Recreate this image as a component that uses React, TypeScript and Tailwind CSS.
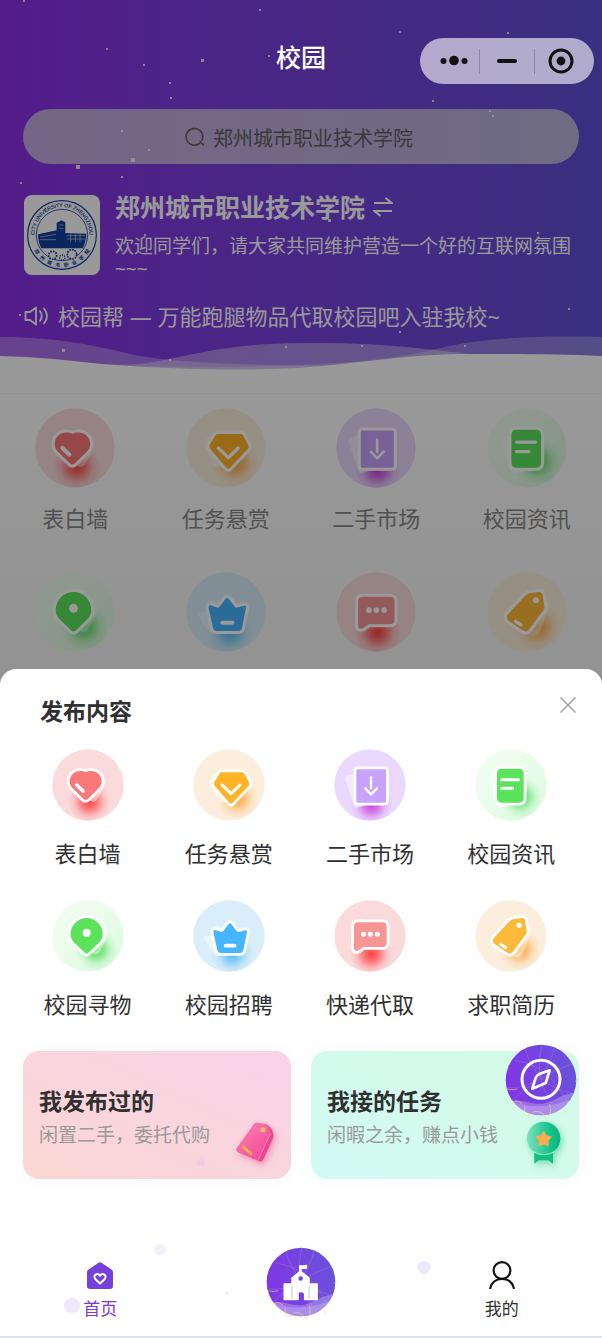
import React, { useId } from "react";

type Kind = "heart" | "gem" | "market" | "news" | "pin" | "crown" | "chat" | "tag";

const palette: Record<Kind, { disc: [string, string]; fill: string; glow: string; at: [number, number] }> = {
  heart: { disc: ["#fadadb", "#fadadb"], fill: "#fa7878", glow: "#ff4545", at: [112, 158] },
  gem: { disc: ["#fbeedd", "#fbeedd"], fill: "#ffb327", glow: "#ffa63d", at: [132, 148] },
  market: { disc: ["#ead9fd", "#ead9fd"], fill: "#c8a2fc", glow: "#c93fe0", at: [112, 166] },
  news: { disc: ["#effdee", "#dafade"], fill: "#5be35b", glow: "#4fdc58", at: [136, 144] },
  pin: { disc: ["#effdee", "#dafade"], fill: "#5be35b", glow: "#4fdc58", at: [132, 148] },
  crown: { disc: ["#d9edfa", "#d9edfa"], fill: "#45b5ff", glow: "#4dbcf5", at: [118, 160] },
  chat: { disc: ["#fadadb", "#fadadb"], fill: "#f79595", glow: "#ff4040", at: [112, 162] },
  tag: { disc: ["#fbeedd", "#fbeedd"], fill: "#fdba38", glow: "#ffa63d", at: [134, 148] },
};

const shapes: Record<Kind, string> = {
  heart: "M101 70C110 65 128 64 139 74C152 86 152 106 140 118L108 149Q101 156 94 149L62 118C50 106 50 86 63 74C74 64 92 65 101 70Z",
  gem: "M87 70H147Q152 70 154 74L168 100Q171 105 167 110L119 161Q114 166 109 161L65 110Q61 105 64 100L79 74Q82 70 87 70Z",
  market: "M71 61H152Q156 61 156 65V157Q156 161 152 161H71Q67 161 67 157V65Q67 61 71 61Z",
  news: "M80 59H132Q146 59 146 73V147Q146 161 132 161H80Q66 161 66 147V73Q66 59 80 59Z",
  pin: "M104 54A48 48 0 0 1 152 102Q152 118 140 129L111 157Q104 164 97 157L68 129Q56 118 56 102A48 48 0 0 1 104 54Z",
  crown: "M67 90L84 96Q88 97 91 93L107 72Q111 67 115 72L131 93Q134 97 138 96L157 91Q163 90 162 96L151 151Q149 159 142 159H82Q75 159 73 151L61 96Q60 89 67 90Z",
  chat: "M72 67H146Q158 67 158 79V129Q158 141 146 141H91Q87 141 84 144L74 151Q60 157 60 145V79Q60 67 72 67Z",
  tag: "M109 60Q113 57 118 57L142 54Q149 54 150 61L155 93Q156 99 152 104L113 156Q106 164 97 158L59 132Q50 125 56 115L103 64Z",
};

const ghosts: Record<Kind, string> = {
  heart: "translate(20 10) rotate(-16 101 105) scale(.94)",
  gem: "translate(-12 14) rotate(18 114 115) scale(.9)",
  market: "translate(-10 12) rotate(-18 110 110) scale(.92)",
  news: "translate(-8 10) rotate(-16 110 110) scale(.95)",
  pin: "translate(24 8) rotate(-16 104 104) scale(.93)",
  crown: "translate(-10 12) rotate(-20 111 110) scale(.88)",
  chat: "translate(36 48) scale(.65)",
  tag: "translate(13 8) rotate(-16 104 110)",
};

function ServiceIcon({ kind, className }: { kind: Kind; className: string }) {
  const id = useId();
  const { disc, fill, glow, at } = palette[kind];
  return (
    <svg viewBox="0 0 216 216" className={className} aria-hidden="true">
      <defs>
        <linearGradient id={`${id}d`} x1="0" y1="0" x2="1" y2="1">
          <stop offset=".3" stopColor={disc[0]} />
          <stop offset="1" stopColor={disc[1]} />
        </linearGradient>
        <radialGradient id={`${id}g`} gradientUnits="userSpaceOnUse" cx={at[0]} cy={at[1]} r="64">
          <stop offset="0" stopColor={glow} />
          <stop offset=".35" stopColor={glow} stopOpacity=".65" />
          <stop offset=".7" stopColor={glow} stopOpacity=".18" />
          <stop offset="1" stopColor={glow} stopOpacity="0" />
        </radialGradient>
        <clipPath id={`${id}c`}>
          <circle cx="108" cy="108" r="107" />
        </clipPath>
      </defs>
      <circle cx="108" cy="108" r="107" fill={`url(#${id}d)`} />
      <circle cx={at[0]} cy={at[1]} r="64" fill={`url(#${id}g)`} clipPath={`url(#${id}c)`} />
      <path d={shapes[kind]} transform={ghosts[kind]} fill="#fff" stroke="#fff" strokeWidth="10" strokeLinejoin="round" opacity=".45" />
      <path d={shapes[kind]} fill="#fff" stroke="#fff" strokeWidth="17" strokeLinejoin="round" />
      <path d={shapes[kind]} fill={fill} />
      <g fill="none" stroke="#fff" strokeWidth="9" strokeLinecap="round" strokeLinejoin="round">
        {kind === "heart" && <path d="M74 108L93 126" strokeWidth="11" />}
        {kind === "gem" && <path d="M87 108L114 134L141 108" />}
        {kind === "market" && <path d="M111 85V118M94 118L111 136L129 118" strokeWidth="7" />}
        {kind === "news" && <path d="M80 92H131M80 118H113" />}
        {kind === "pin" && <circle cx="104" cy="98" r="12" fill="#fff" stroke="none" />}
        {kind === "crown" && <path d="M98 137H125" strokeWidth="11" />}
        {kind === "chat" && (
          <g fill="#fff" stroke="none">
            <circle cx="89" cy="103" r="7.5" />
            <circle cx="109" cy="103" r="7.5" />
            <circle cx="130" cy="103" r="7.5" />
          </g>
        )}
        {kind === "tag" && (
          <>
            <circle cx="132" cy="76" r="8" fill="#fff" stroke="none" />
            <path d="M77 133L92 143" />
          </>
        )}
      </g>
    </svg>
  );
}

const services: { kind: Kind; label: string }[] = [
  { kind: "heart", label: "表白墙" },
  { kind: "gem", label: "任务悬赏" },
  { kind: "market", label: "二手市场" },
  { kind: "news", label: "校园资讯" },
  { kind: "pin", label: "校园寻物" },
  { kind: "crown", label: "校园招聘" },
  { kind: "chat", label: "快递代取" },
  { kind: "tag", label: "求职简历" },
];

const sparks: [number, number, number][] = [
  [24, 1, 2], [260, 10, 2], [107, 49, 2], [144, 65, 2], [202, 60, 3], [269, 56, 2], [170, 83, 2], [171, 98, 2],
  [122, 131, 2], [149, 150, 2], [132, 159, 4], [77, 166, 4], [122, 177, 2], [21, 183, 2], [400, 32, 2], [508, 33, 2],
  [433, 101, 2], [490, 111, 2], [493, 116, 2], [145, 235, 2], [329, 220, 3], [538, 233, 2], [20, 315, 2], [441, 315, 2],
  [569, 309, 2], [400, 332, 2], [63, 350, 3], [286, 347, 2], [170, 360, 2], [362, 346, 2], [465, 346, 2],
];

function Sparks() {
  return (
    <svg className="pointer-events-none absolute left-0 top-0 h-[373px] w-full" viewBox="0 0 602 373" preserveAspectRatio="none" aria-hidden="true">
      {sparks.map(([x, y, s]) => (
        <rect key={`${x}-${y}`} x={x - 1} y={y - 1} width={s} height={s} fill="#fffde0" opacity=".85" />
      ))}
    </svg>
  );
}

function Waves() {
  return (
    <svg className="block h-[41px] w-full" viewBox="0 332 602 41" preserveAspectRatio="none" aria-hidden="true">
      <path d="M0 337C60 337 100 347 135 355C190 366 300 367 602 366V373H0Z" fill="#fff" opacity=".3" />
      <path d="M0 356C70 357 90 367 140 364C185 358 215 344 300 343C390 342 430 350 490 356C530 360 570 364 602 366V373H0Z" fill="#fff" opacity=".38" />
      <path d="M150 366C330 370 400 358 440 348C490 336 550 336 602 337V373H150Z" fill="#fff" opacity=".28" />
      <path d="M0 356C60 358 90 364 130 366C190 370 260 371 310 367C370 362 410 354 470 354C520 354 560 354 602 356V374H0Z" fill="#fff" />
    </svg>
  );
}

const sealChars = ["郑", "州", "城", "市", "职", "业", "学", "院"];

function SchoolSeal() {
  return (
    <svg viewBox="0 0 228 240" className="h-20 w-[76px] shrink-0 rounded-lg bg-white" role="img" aria-label="郑州城市职业技术学院">
      <defs>
        <path id="seal-top" d="M34 136A82 82 0 1 1 194 136" />
        <path id="seal-bottom" d="M20 135A95 95 0 0 0 208 135" />
      </defs>
      <g fill="none" stroke="#13409a">
        <circle cx="114" cy="120" r="103" strokeWidth="3.5" />
        <circle cx="114" cy="120" r="77" strokeWidth="2.5" />
      </g>
      <g fill="#13409a">
        <path d="M42 118L98 106V84L112 76L124 82V114L187 116Q186 142 176 160H52Q43 144 42 118Z" />
        <circle cx="86" cy="181" r="12" fill="#fff" stroke="#13409a" strokeWidth="5" strokeDasharray="5 3" />
        <circle cx="144" cy="178" r="14" fill="#fff" stroke="#13409a" strokeWidth="5" strokeDasharray="5 3" />
        <circle cx="115" cy="188" r="8" fill="#fff" stroke="#13409a" strokeWidth="4" strokeDasharray="4 3" />
      </g>
      <path d="M48 126L96 118M48 134H96M128 122H184M128 132H184M140 116V142M154 116V142M168 116V142M106 90H118M106 100H118" stroke="#fff" strokeWidth="1.5" />
      <text className="font-['Liberation_Sans']" fontSize="15.5" fill="#13409a" stroke="#13409a" strokeWidth=".4">
        <textPath href="#seal-top" startOffset="50%" textAnchor="middle">CITY UNIVERSITY OF ZHENGZHOU</textPath>
      </text>
      <text className="font-['Noto_Sans_CJK_SC']" fontSize="15" fontWeight="700" fill="#13409a">
        {sealChars.map((char, i) => (
          <textPath key={char} href="#seal-bottom" startOffset={`${15 + i * 10}%`} textAnchor="middle">
            {char}
          </textPath>
        ))}
      </text>
    </svg>
  );
}

function StatusCapsule() {
  return (
    <div className="flex h-[46px] w-[174px] items-center rounded-full bg-white/60 text-[#111]">
      <button type="button" aria-label="更多" className="flex flex-1 justify-center pl-2">
        <svg className="h-3 w-7" viewBox="0 0 28 12" fill="currentColor">
          <circle cx="3.5" cy="6" r="3" />
          <circle cx="14" cy="5.5" r="4.8" />
          <circle cx="24.5" cy="6" r="3" />
        </svg>
      </button>
      <span className="h-[25px] w-px bg-[#8f87ad]" />
      <button type="button" aria-label="最小化" className="flex w-[54px] justify-center">
        <span className="h-1 w-5 rounded-full bg-[#111]" />
      </button>
      <span className="h-[25px] w-px bg-[#8f87ad]" />
      <button type="button" aria-label="关闭小程序" className="flex flex-1 justify-center pr-2">
        <svg className="size-[26px]" viewBox="0 0 26 26">
          <circle cx="13" cy="13" r="11" fill="none" stroke="currentColor" strokeWidth="3" />
          <circle cx="13" cy="13" r="4.4" fill="currentColor" />
        </svg>
      </button>
    </div>
  );
}

function OrbBase({ id }: { id: string }) {
  return (
    <>
      <defs>
        <linearGradient id={id} x1="0" y1=".6" x2="1" y2=".3">
          <stop offset="0" stopColor="#8035e6" />
          <stop offset="1" stopColor="#6a52da" />
        </linearGradient>
        <clipPath id={`${id}-clip`}>
          <circle cx="108" cy="108" r="106" />
        </clipPath>
      </defs>
      <circle cx="108" cy="108" r="106" fill={`url(#${id})`} />
      <g clipPath={`url(#${id}-clip)`}>
        <path d="M0 172C50 160 80 186 120 178C155 168 170 148 216 146V216H0Z" fill="#fff" opacity=".25" />
        <path d="M0 160C60 196 130 196 216 160V216H0Z" fill="#fff" opacity=".2" />
        <g fill="none" stroke="#d8b8b4" strokeWidth="1.5" opacity=".45">
          <path d="M10 130Q120 140 150 4M60 10Q90 130 212 150M200 60Q110 90 20 170M112 2Q80 110 160 205M30 50Q130 60 190 180" />
        </g>
      </g>
      <path d="M2 134Q22 140 38 135M20 178Q36 164 52 180M60 188Q52 226 82 210M84 204Q108 196 124 222Q142 216 134 180M178 196L183 208M210 112L222 106" fill="none" stroke="#f0e070" strokeWidth="2.5" opacity=".75" />
    </>
  );
}

function TagArt() {
  return (
    <svg viewBox="0 0 144 144" className="size-12 shrink-0 overflow-visible drop-shadow-[2px_3px_3px_#f0509080]" aria-hidden="true">
      <defs>
        <linearGradient id="tag-face" x1="0" y1="0" x2="1" y2="1">
          <stop offset="0" stopColor="#fb86b4" />
          <stop offset="1" stopColor="#f23c92" />
        </linearGradient>
      </defs>
      <path d="M68 16Q72 10 80 11L102 14Q122 20 127 44Q129 50 125 58L97 120Q93 130 84 127L24 101Q12 96 18 86Z" fill="url(#tag-face)" />
      <path d="M98 16Q117 22 118 44L80 124L92 127Q97 124 99 118L127 56V44Q121 22 98 16Z" fill="#e9408f" opacity=".7" />
      <path d="M118 44L81 124" stroke="#ffa4cb" strokeWidth="2" />
      <circle cx="96" cy="32" r="8" fill="#f7ba60" />
      <path d="M37 84L60 104" stroke="#f7b04c" strokeWidth="8" strokeLinecap="round" />
    </svg>
  );
}

function MedalArt() {
  return (
    <svg viewBox="0 0 144 144" className="size-12 shrink-0 overflow-visible drop-shadow-[2px_3px_3px_#20c08080]" aria-hidden="true">
      <defs>
        <linearGradient id="medal-face" x1="0" y1="0" x2="1" y2="0">
          <stop offset="0" stopColor="#7fe0bf" />
          <stop offset=".65" stopColor="#18c58b" />
          <stop offset="1" stopColor="#03b57a" />
        </linearGradient>
      </defs>
      <path d="M46 100H102V134L88 124L74 124L60 124L46 134Z" fill="#12bf80" />
      <circle cx="74" cy="58" r="50" fill="url(#medal-face)" />
      <path d="M38 96Q74 118 110 96" fill="none" stroke="#a8f2d3" strokeWidth="3" />
      <path d="M74 39L81 51L95 54L86 65L87 79L74 74L61 79L62 65L53 54L67 51Z" fill="#f8ab4f" stroke="#f8ab4f" strokeWidth="5" strokeLinejoin="round" />
    </svg>
  );
}

function ActionCard({ title, note, tone, art }: { title: string; note: string; tone: string; art: React.ReactNode }) {
  return (
    <a href="#" className={`flex h-32 items-end justify-between rounded-2xl pb-3 pl-4 pr-3 shadow-[0_0_20px_#00000008] ${tone}`}>
      <div className="self-center pt-4">
        <h3 className="text-[23px] font-bold leading-9 text-[#303030]">{title}</h3>
        <p className="text-[19px] leading-8 text-[#999]">{note}</p>
      </div>
      {art}
    </a>
  );
}

export default function App() {
  return (
    <div className="relative min-h-screen overflow-hidden bg-[#f5f5f5] font-['Noto_Sans','Noto_Sans_CJK_SC',sans-serif]">
      <header className="bg-linear-to-r from-[#8b2fe6] to-[#604fd6] pt-[38px]">
        <div className="relative z-20 grid h-[46px] grid-cols-[1fr_auto_1fr] pr-2">
          <h1 className="col-start-2 pl-2 text-[25px] font-medium leading-[38px] text-white">校园</h1>
          <div className="flex justify-end">
            <StatusCapsule />
          </div>
        </div>

        <label className="mx-[23px] mt-[25px] flex h-[55px] items-center justify-center gap-2 rounded-full bg-[#ddd]/70 text-[#606060]">
          <svg className="size-5" viewBox="0 0 20 20" fill="none" stroke="currentColor" strokeWidth="1.6" strokeLinecap="round">
            <path d="M14.500 16.300A8.300 8.300 0 1 1 16.800 13.500M15 14.500L18.500 18" />
          </svg>
          <input type="text" aria-label="搜索" placeholder="郑州城市职业技术学院" className="h-9 w-[204px] bg-transparent pt-1 text-xl leading-8 outline-none placeholder:text-[#606060]" />
        </label>

        <section className="mx-6 mt-[31px] flex gap-[15px] text-white">
          <SchoolSeal />
          <div>
            <h2 className="flex items-center gap-2 text-[25px] font-bold leading-6">
              郑州城市职业技术学院
              <button type="button" aria-label="切换学校">
                <svg className="h-5 w-5" viewBox="0 0 20 20" fill="none" stroke="currentColor" strokeWidth="2.200">
                  <path d="M1 6H18.500L12.500 1M19 14H1.500L7.500 19" />
                </svg>
              </button>
            </h2>
            <p className="mt-4 text-[19px] leading-[23px]">欢迎同学们，请大家共同维护营造一个好的互联网氛围~~~</p>
          </div>
        </section>

        <p className="mx-6 mt-[19px] flex items-center gap-2 text-[22px] leading-8 text-white">
          <svg className="h-5 w-[26px]" viewBox="0 0 26 20" fill="none" stroke="currentColor" strokeWidth="1.8" strokeLinecap="round" strokeLinejoin="round">
            <path d="M1.500 6H6L12 1.500V18.500L6 14H1.500ZM16 5Q19.500 10 16 15M20 2.500Q26 10 20 17.500" />
          </svg>
          校园帮 — 万能跑腿物品代取校园吧入驻我校~
        </p>
        <Waves />
      </header>

      <main className="bg-linear-to-b from-white to-[#f5f5f5]">
        <div className="pt-5">
          <div className="h-px bg-[#f0efff]" />
        </div>
        <ul className="mt-[14px] grid grid-cols-4 gap-y-[38px]">
          {services.slice(0, 4).map(({ kind, label }) => (
            <li key={kind}>
              <a href="#" className="flex flex-col items-center">
                <ServiceIcon kind={kind} className="size-20" />
                <span className="mt-[14px] text-[22px] leading-8 text-[#888]">{label}</span>
              </a>
            </li>
          ))}
          {services.slice(4).map(({ kind, label }) => (
            <li key={kind}>
              <a href="#" aria-label={label} className="flex flex-col items-center">
                <ServiceIcon kind={kind} className="size-20" />
              </a>
            </li>
          ))}
        </ul>
      </main>

      <Sparks />
      <div className="absolute inset-0 z-10 bg-black/40" />

      <section role="dialog" aria-labelledby="publish-title" className="absolute inset-x-0 bottom-0 z-30 rounded-t-2xl bg-white">
        <div className="flex items-start justify-between pb-6 pl-10 pr-[26px] pt-7">
          <h2 id="publish-title" className="text-[23px] font-bold leading-7 text-[#303030]">发布内容</h2>
          <button type="button" aria-label="关闭">
            <svg className="size-4" viewBox="0 0 16 16" stroke="#999" strokeWidth="1.3">
              <path d="M.5.5L15.500 15.500M15.500.5L.5 15.500" />
            </svg>
          </button>
        </div>

        <ul className="ml-[17px] mr-5 grid grid-cols-4 gap-y-[31px]">
          {services.map(({ kind, label }) => (
            <li key={kind}>
              <a href="#" className="flex flex-col items-center">
                <ServiceIcon kind={kind} className="size-[72px]" />
                <span className="mt-4 text-[22px] leading-8 text-[#303030]">{label}</span>
              </a>
            </li>
          ))}
        </ul>

        <div className="relative mx-[23px] mt-[31px] grid grid-cols-2 gap-5">
          <ActionCard title="我发布过的" note="闲置二手，委托代购" tone="bg-linear-to-tr from-[#fad7d2] to-[#f9d3e9]" art={<TagArt />} />
          <ActionCard title="我接的任务" note="闲暇之余，赚点小钱" tone="bg-linear-to-tr from-[#d2faf4] to-[#d4fbe4]" art={<MedalArt />} />
          <button type="button" aria-label="发现" className="absolute -top-[7px] right-0.5 size-[72px]">
            <svg viewBox="0 0 216 216" className="size-full overflow-visible">
              <OrbBase id="orb-compass" />
              <g fill="none" stroke="#fff" strokeLinejoin="round">
                <circle cx="108" cy="106" r="57" strokeWidth="9" />
                <path d="M101 91L134 79L122 117L82 134L91 104Q94 95 101 91Z" strokeWidth="8" />
              </g>
            </svg>
          </button>
          <span className="absolute bottom-3 left-[174px] size-2 rounded-full bg-[#f2cce6]" />
        </div>

        <nav className="relative mt-[59px] grid h-[100px] grid-cols-3 border-b-2 border-[#dce3e8] text-[17px] leading-6">
          <svg className="pointer-events-none absolute inset-0 size-full" viewBox="0 0 602 100" preserveAspectRatio="none" fill="#eee8fc" aria-hidden="true">
            <circle cx="160" cy="12" r="6" opacity=".7" />
            <circle cx="72" cy="69" r="8" />
            <circle cx="424" cy="30" r="6.500" />
            <circle cx="227" cy="56" r="1.500" />
          </svg>
          <a href="#" className="relative flex flex-col items-center pt-6 text-[#8035e0]">
            <svg className="h-[27px] w-7" viewBox="0 0 28 27" fill="none">
              <path d="M12.500.8Q14-.3 15.500.8L25.500 7.500Q27 8.500 27 10V24Q27 27 24 27H4Q1 27 1 24V10Q1 8.500 2.500 7.500Z" fill="#7640dc" />
              <path d="M14 21.500L9.300 17C6.500 13.500 11.200 10 14 13.800C16.800 10 21.500 13.500 18.700 17Z" stroke="#fff" strokeWidth="2" strokeLinejoin="round" />
            </svg>
            <span className="mt-2">首页</span>
          </a>
          <a href="#" aria-label="校园" className="relative flex justify-center pt-[9px]">
            <svg viewBox="0 0 216 216" className="size-[70px] overflow-visible">
              <OrbBase id="orb-campus" />
              <path d="M104 58H108V76L133 96V114H158V162H119V146Q119 138 108 138T99 146V162H56V114H80V96L104 76Z" fill="#fff" stroke="#fff" strokeWidth="4" strokeLinejoin="round" />
              <path d="M107 57L127 55V67L107 69Z" fill="#fff" />
              <circle cx="107" cy="97" r="7" fill="#7442df" />
              <path d="M80 120V160M133 120V160" stroke="#cdb6ef" strokeWidth="3" />
            </svg>
          </a>
          <a href="#" className="relative flex flex-col items-center pt-[23px] text-[#303030]">
            <svg className="h-7 w-[26px]" viewBox="0 0 26 28" fill="none" stroke="#111" strokeWidth="2.200">
              <circle cx="13" cy="9.500" r="8.400" />
              <path d="M1 28Q3 18 13 18T25 28" />
            </svg>
            <span className="mt-2">我的</span>
          </a>
        </nav>
      </section>
    </div>
  );
}
